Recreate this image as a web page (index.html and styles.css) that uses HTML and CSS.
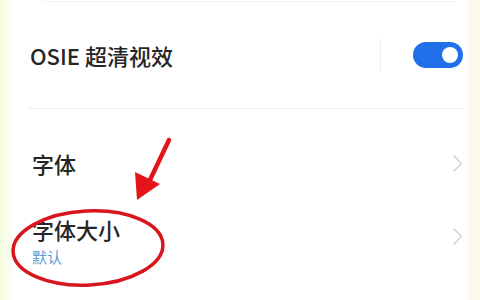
FILE: index.html
```html
<!DOCTYPE html>
<html lang="zh">
<head>
  <meta charset="UTF-8">
  <title>设置</title>
  <link rel="stylesheet" href="styles.css">
</head>
<body>
  <div class="screen">
    <div class="edge-left"></div>
    <div class="list">
      <div class="top-line"></div>

      <div class="row row-switch">
        <span class="title">OSIE 超清视效</span>
        <div class="switch-box">
          <span class="vline"></span>
          <span class="toggle"><span class="knob"></span></span>
        </div>
      </div>

      <div class="divider"></div>

      <div class="row row-font">
        <span class="title">字体</span>
        <span class="chevron">
          <svg width="11" height="19" viewBox="0 0 11 19"><path d="M1.5 1.5 L9.5 9.5 L1.5 17.5" fill="none" stroke="#cfcfcf" stroke-width="1.4"/></svg>
        </span>
      </div>

      <div class="row row-size">
        <div class="text-col">
          <span class="title">字体大小</span>
          <span class="sub">默认</span>
        </div>
        <span class="chevron">
          <svg width="11" height="19" viewBox="0 0 11 19"><path d="M1.5 1.5 L9.5 9.5 L1.5 17.5" fill="none" stroke="#cfcfcf" stroke-width="1.4"/></svg>
        </span>
      </div>
    </div>
    <div class="edge-right"></div>

    <svg class="markup" width="480" height="300" viewBox="0 0 480 300">
      <line x1="169" y1="140" x2="149" y2="182" stroke="#e3151a" stroke-width="4.5" stroke-linecap="round"/>
      <polygon points="137,200 135,172 160,184" fill="#e3151a"/>
      <ellipse cx="88" cy="248" rx="75" ry="37" fill="none" stroke="#d8161d" stroke-width="3.5" transform="rotate(-3 88 248)"/>
    </svg>
  </div>
</body>
</html>
```

FILE: styles.css
```css
body { margin: 0; background: #fff; font-family: "Noto Sans CJK SC", "Noto Sans", sans-serif; color: #222; }
.screen { position: relative; display: flex; width: 480px; height: 300px; overflow: hidden; }
.edge-left { width: 12px; background: linear-gradient(to right, #f6fbdf, #fbfdf0); }
.edge-right { width: 12px; background: #fdf8ee; }
.list { flex: 1; padding: 0 5px 0 16px; }
.top-line { height: 1px; margin: 1px 8px 0 14px; background: #f2f2f2; }

.row { display: flex; align-items: center; justify-content: space-between; }
.title { font-size: 22px; line-height: 22px; font-weight: 500; color: #262626; }

.row-switch { height: 106px; padding-left: 2px; }
.switch-box { display: flex; align-items: center; }
.vline { width: 1px; height: 32px; background: #ececec; margin-right: 32px; }
.toggle {
  width: 50px; height: 26px; border-radius: 13px; background: #2170ea;
  display: flex; align-items: center; justify-content: flex-end; padding-right: 5px; box-sizing: border-box;
}
.knob { width: 16px; height: 16px; border-radius: 50%; background: #fff; }

.divider { height: 1px; margin-left: 0; background: #f0f0f0; }

.row-font { padding: 43px 0 0 4px; }
.row-size { padding: 44px 0 0 4px; }
.text-col { display: flex; flex-direction: column; }
.sub { font-size: 15px; line-height: 15px; color: #5a9ad8; margin-top: 9px; }
.chevron { display: flex; }
.row-size .chevron { margin-top: -10px; }

.markup { position: absolute; left: 0; top: 0; pointer-events: none; }
```
